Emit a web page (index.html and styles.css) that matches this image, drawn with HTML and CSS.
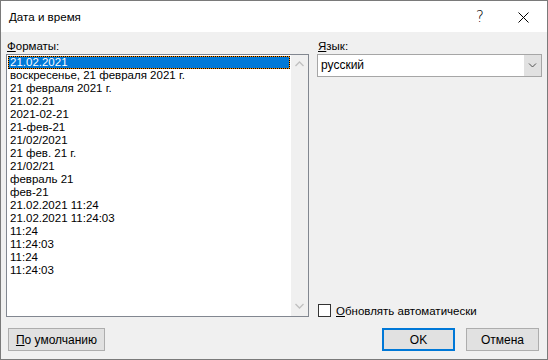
FILE: index.html
```html
<!DOCTYPE html>
<html>
<head>
<meta charset="utf-8">
<title>Дата и время</title>
<link rel="stylesheet" href="styles.css">
</head>
<body>
<div class="window">
	<div class="titlebar">
		<span class="title">Дата и время</span>
		<span class="help">?</span>
		<span class="close">
			<svg width="11" height="11" viewBox="0 0 11 11"><path d="M0.5 0.5L10.5 10.5M10.5 0.5L0.5 10.5" stroke="#000" stroke-width="1" fill="none"/></svg>
		</span>
	</div>
	<div class="content">
		<div class="top">
			<div class="col-left">
				<div class="label"><u>Ф</u>орматы:</div>
				<div class="listbox">
					<ul class="items">
						<li class="selected">21.02.2021</li>
						<li>воскресенье, 21 февраля 2021 г.</li>
						<li>21 февраля 2021 г.</li>
						<li>21.02.21</li>
						<li>2021-02-21</li>
						<li>21-фев-21</li>
						<li>21/02/2021</li>
						<li>21 фев. 21 г.</li>
						<li>21/02/21</li>
						<li>февраль 21</li>
						<li>фев-21</li>
						<li>21.02.2021 11:24</li>
						<li>21.02.2021 11:24:03</li>
						<li>11:24</li>
						<li>11:24:03</li>
						<li>11:24</li>
						<li>11:24:03</li>
					</ul>
					<div class="scrollbar">
						<svg class="arrow" width="9" height="6" viewBox="0 0 9 6"><path d="M0.5 5L4.5 1L8.5 5" stroke="#c0c0c0" stroke-width="1.3" fill="none"/></svg>
						<svg class="arrow" width="9" height="6" viewBox="0 0 9 6"><path d="M0.5 1L4.5 5L8.5 1" stroke="#c0c0c0" stroke-width="1.3" fill="none"/></svg>
					</div>
				</div>
			</div>
			<div class="col-right">
				<div class="label"><u>Я</u>зык:</div>
				<div class="combo">
					<span class="combo-value">русский</span>
					<span class="combo-btn">
						<svg width="9" height="5" viewBox="0 0 9 5"><path d="M1 0.5L4.5 4L8 0.5" stroke="#505050" stroke-width="1" fill="none"/></svg>
					</span>
				</div>
				<div class="check">
					<span class="box"></span>
					<span><u>О</u>бновлять автоматически</span>
				</div>
			</div>
		</div>
		<div class="bottom">
			<button class="btn btn-reset"><u>П</u>о умолчанию</button>
			<div class="actions">
				<button class="btn btn-ok">OK</button>
				<button class="btn">Отмена</button>
			</div>
		</div>
	</div>
</div>
</body>
</html>
```
FILE: styles.css
```css
*{
	margin: 0;
	padding: 0;
	box-sizing: border-box;
}
body{
	font-family: "Liberation Sans", Arial, sans-serif;
	font-size: 11.5px;
	color: #000;
	background: #fff;
}
.window{
	width: 548px;
	height: 360px;
	border: 1px solid #7a7a7a;
	background-color: #f0f0f0;
	display: flex;
	flex-direction: column;
}
.titlebar{
	height: 31px;
	background-color: #fff;
	display: flex;
	align-items: center;
	position: relative;
}
.title{
	padding-left: 8px;
	font-size: 11.6px;
}
.help{
	position: absolute;
	left: 475px;
	top: 8px;
	font-size: 15px;
	line-height: 16px;
	font-family: "DejaVu Sans", sans-serif;
	font-weight: 300;
}
.close{
	position: absolute;
	left: 517px;
	top: 11px;
	display: flex;
}
.content{
	flex: 1;
	padding: 6px 5px 8px 5px;
	display: flex;
	flex-direction: column;
}
.top{
	display: flex;
}
.label{
	line-height: 16px;
	height: 16px;
	padding-left: 1px;
}
.col-left{
	width: 303px;
}
.listbox{
	height: 263px;
	border: 1px solid #828790;
	background-color: #fff;
	display: flex;
}
ul.items{
	list-style: none;
	flex: 1;
	padding: 1px;
}
.items li{
	height: 13px;
	line-height: 13px;
	padding-left: 2px;
	white-space: nowrap;
}
.items li.selected{
	color: #fff;
	padding-left: 1px;
	border: 1px dotted #000;
	line-height: 11px;
	background: linear-gradient(#0078d7, #0078d7) padding-box, #ff8c00 border-box;
}
.scrollbar{
	width: 17px;
	background-color: #f0f0f0;
	display: flex;
	flex-direction: column;
	justify-content: space-between;
	align-items: center;
	padding: 6px 0 7px;
}
.col-right{
	width: 225px;
	margin-left: 8px;
	display: flex;
	flex-direction: column;
}
.combo{
	height: 23px;
	border: 1px solid #a6a6a6;
	background-color: #fff;
	display: flex;
	font-size: 12px;
}
.combo-value{
	flex: 1;
	padding-left: 3px;
	line-height: 21px;
}
.combo-btn{
	width: 17px;
	background-color: #e1e1e1;
	display: flex;
	align-items: center;
	justify-content: center;
}
.check{
	margin-top: auto;
	margin-left: 1px;
	display: flex;
	align-items: center;
	height: 13px;
	gap: 5px;
}
.box{
	width: 13px;
	height: 13px;
	border: 1px solid #333;
	background-color: #fff;
}
.bottom{
	margin-top: 11px;
	display: flex;
	justify-content: space-between;
}
.btn{
	height: 23px;
	width: 73px;
	border: 1px solid #adadad;
	background-color: #e1e1e1;
	font: inherit;
	font-size: 12px;
	color: #000;
}
.btn-reset{
	width: 97px;
	margin-left: 2px;
}
.actions{
	display: flex;
	gap: 11px;
	margin-right: 3px;
}
.btn-ok{
	border: 2px solid #0078d7;
}
```
